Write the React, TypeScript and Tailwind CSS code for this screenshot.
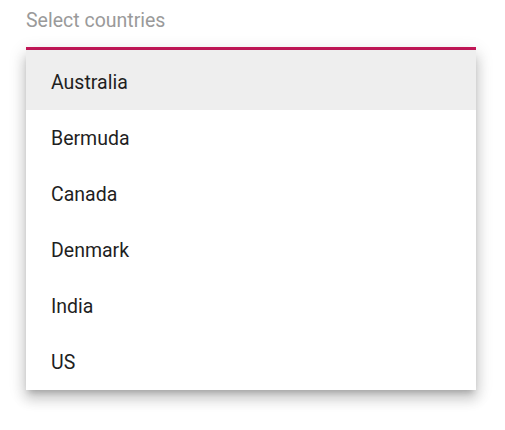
const countries = ["Australia", "Bermuda", "Canada", "Denmark", "India", "US"]

export default function App() {
  return (
    <div className="min-h-screen bg-white font-['Roboto',sans-serif]">
      <div className="ml-[26px] w-[450px]">
        {/* Input */}
        <div className="h-[47px] pt-[7px] text-[19.5px] leading-[28px] text-[#9a9a9a]">Select countries</div>
        <div className="h-[3px] bg-[#c8185a]" />

        {/* Menu */}
        <ul className="bg-white shadow-[0_5px_6px_-3px_rgba(0,0,0,0.2),0_9px_12px_1px_rgba(0,0,0,0.14),0_3px_16px_2px_rgba(0,0,0,0.12)]">
          {countries.map((c, i) => (
            <li
              key={c}
              className={`flex items-center pl-[25px] text-[19.5px] text-[#1f1f1f] ${
                i === 0 ? "h-[60px] pt-[6px] bg-[#eeeeee]" : "h-[56px] pt-[2px]"
              }`}
            >
              {c}
            </li>
          ))}
        </ul>
      </div>
    </div>
  )
}
